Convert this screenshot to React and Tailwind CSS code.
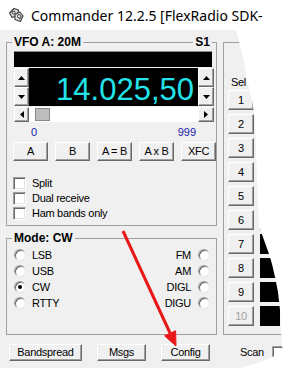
import React from "react";

const btn =
  "flex items-center justify-center bg-[#f0f0f0] border border-t-white border-l-white border-r-[#696969] border-b-[#696969] shadow-[inset_-1px_-1px_0_#a0a0a0]";

function Tri({ dir }) {
  const vert = dir === "up" || dir === "down";
  const w = vert ? 7 : 4;
  const h = vert ? 4 : 7;
  const pts = {
    up: "0,4 3.5,0 7,4",
    down: "0,0 7,0 3.5,4",
    left: "4,0 4,7 0,3.5",
    right: "0,0 0,7 4,3.5",
  }[dir];
  return (
    <svg width={w} height={h} viewBox={`0 0 ${w} ${h}`}>
      <polygon points={pts} fill="black" />
    </svg>
  );
}

function Check() {
  return (
    <span className="block h-[13px] w-[13px] border border-t-[#a0a0a0] border-l-[#a0a0a0] border-r-white border-b-white bg-white shadow-[inset_1px_1px_0_#696969,inset_-1px_-1px_0_#e3e3e3]" />
  );
}

function Radio({ checked }) {
  return (
    <span className="flex h-[12px] w-[12px] items-center justify-center rounded-full border border-t-[#a0a0a0] border-l-[#a0a0a0] border-r-[#e3e3e3] border-b-[#e3e3e3] bg-white shadow-[inset_1px_1px_0_#696969]">
      {checked && <span className="h-[4px] w-[4px] rounded-full bg-black" />}
    </span>
  );
}

function GroupTop({ label, right, open }) {
  return (
    <div className="flex h-[14px] items-center">
      <div className="h-[7px] w-[6px] self-end border-l border-t border-[#a0a0a0]" />
      {label && <span className="px-[2px] text-[12px] font-bold leading-none tracking-normal">{label}</span>}
      <div className="h-[7px] flex-1 self-end border-t border-[#a0a0a0]" />
      {right && <span className="px-[2px] text-[12px] font-bold leading-none tracking-normal">{right}</span>}
      {!open && <div className="h-[7px] w-[5px] self-end border-r border-t border-[#a0a0a0]" />}
    </div>
  );
}

function AppIcon() {
  return (
    <svg className="shrink-0" width="16" height="16" viewBox="0 0 16 16">
      <path d="M1.5 6 L6 1.5 L10.5 3 L9.5 8.5 L4 10.5 Z" fill="#dcdcdc" stroke="#3a3a3a" strokeWidth="1.1" strokeLinejoin="round" />
      <path d="M7 7.5 L12 5 L15 9 L12.5 14.5 L7 12.5 Z" fill="#ececec" stroke="#3a3a3a" strokeWidth="1.1" strokeLinejoin="round" />
      <circle cx="11.2" cy="9.3" r="1.8" fill="none" stroke="#3a3a3a" strokeWidth="1" />
      <path d="M12.8 9.5 L11.5 12.5" stroke="#3a3a3a" strokeWidth="1" />
      <circle cx="5.6" cy="5.6" r="1.5" fill="none" stroke="#3a3a3a" strokeWidth="1" />
    </svg>
  );
}

export default function App() {
  const sel = ["1", "2", "3", "4", "5", "6", "7", "8", "9", "10"];
  const modes = [
    ["LSB", "FM", false],
    ["USB", "AM", false],
    ["CW", "DIGL", true],
    ["RTTY", "DIGU", false],
  ];
  return (
    <div className="relative h-[368px] w-[288px] overflow-hidden bg-[#f0f0f0] font-['Liberation_Sans',Arial,sans-serif] text-[11px] tracking-[-0.3px] text-black">
      {/* title bar */}
      <div className="flex h-[30px] items-center bg-white pl-[8px]">
        <AppIcon />
        <span className="ml-[7px] whitespace-nowrap font-['Noto_Sans',sans-serif] text-[14px] tracking-normal text-black">
          Commander 12.2.5 [FlexRadio SDK-
        </span>
      </div>

      <div className="flex gap-[6px] pl-[6px] pt-[5px]">
        {/* left column */}
        <div className="flex w-[213px] flex-col">
          {/* VFO group */}
          <div className="flex flex-col">
            <GroupTop label="VFO A: 20M" right="S1" />
            <div className="flex h-[177px] flex-col border-x border-b border-[#a0a0a0] pl-[7px] pt-[2px]">
              <div className="h-[16px] w-[198px] border-t border-[#8a8a8a] bg-black" />
              <div className="mt-[1px] flex h-[38px]">
                <div className="flex w-[15px] flex-col">
                  <div className={`${btn} h-[19px]`}><Tri dir="up" /></div>
                  <div className={`${btn} h-[19px]`}><Tri dir="down" /></div>
                </div>
                <div className="flex w-[169px] items-start justify-end bg-black pr-[4px] pt-[6px]">
                  <span className="text-[31px] leading-none tracking-normal text-[#22e4ea]">14.025,50</span>
                </div>
                <div className="flex w-[16px] flex-col">
                  <div className={`${btn} h-[19px]`}><Tri dir="up" /></div>
                  <div className={`${btn} h-[19px]`}><Tri dir="down" /></div>
                </div>
              </div>
              <div className="mt-[1px] flex h-[15px] w-[200px]">
                <div className={`${btn} w-[15px]`}><Tri dir="left" /></div>
                <div className="flex flex-1 items-center bg-white pl-[6px]">
                  <div className="h-[13px] w-[15px] border border-[#8a8a8a] bg-[#bdbdbd]" />
                </div>
                <div className={`${btn} w-[16px]`}><Tri dir="right" /></div>
              </div>
              <div className="mt-[4px] flex h-[12px] w-[200px] items-center justify-between pl-[17px] pr-[18px] leading-none tracking-normal text-[#1a1aa6]">
                <span>0</span>
                <span>999</span>
              </div>
              <div className="mt-[4px] flex h-[19px] gap-[7px] -ml-px">
                {["A", "B", "A = B", "A x B", "XFC"].map((t) => (
                  <div key={t} className={`${btn} w-[35px]`}>{t}</div>
                ))}
              </div>
              <div className="mt-[15px] flex flex-col -ml-px">
                {["Split", "Dual receive", "Ham bands only"].map((t) => (
                  <div key={t} className="flex h-[15px] items-center gap-[6px]">
                    <Check />
                    <span>{t}</span>
                  </div>
                ))}
              </div>
            </div>
          </div>

          {/* Mode group */}
          <div className="mt-[5px] flex flex-col">
            <GroupTop label="Mode: CW" />
            <div className="flex h-[90px] flex-col border-x border-b border-[#a0a0a0] pl-[7px] pr-[6px] pt-[2px]">
              {modes.map(([l, r, c]) => (
                <div key={l} className="flex h-[16px] items-center justify-between">
                  <div className="flex items-center gap-[6px]">
                    <Radio checked={c} />
                    <span>{l}</span>
                  </div>
                  <div className="flex items-center gap-[7px]">
                    <span>{r}</span>
                    <Radio />
                  </div>
                </div>
              ))}
            </div>
          </div>
        </div>

        {/* right column */}
        <div className="flex w-[70px] shrink-0 flex-col">
          <GroupTop open />
          <div className="flex h-[286px] flex-col border-l border-b border-[#a0a0a0] pl-[4px] pt-[26px]">
            <div className="flex h-[15px] items-center pl-[3px]">Sel</div>
            <div className="flex flex-col gap-[4px]">
              {sel.map((n) => (
                <div key={n} className="flex items-center">
                  <div className={`${btn} h-[20px] w-[26px] ${n === "10" ? "text-[#a0a0a0]" : ""}`}>{n}</div>
                  <div className="ml-[6px] h-[20px] w-[20px] bg-black" />
                </div>
              ))}
            </div>
          </div>
        </div>
      </div>

      {/* bottom row */}
      <div className="mt-[9px] flex h-[17px] items-center pl-[9px]">
        <div className={`${btn} h-[17px] w-[73px]`}>Bandspread</div>
        <div className={`${btn} ml-[15px] h-[17px] w-[49px]`}>Msgs</div>
        <div className={`${btn} ml-[15px] h-[17px] w-[49px]`}>Config</div>
        <span className="ml-[30px]">Scan</span>
        <span className="ml-[8px]"><Check /></span>
      </div>

      {/* torn edge + annotation arrow */}
      <svg className="pointer-events-none absolute inset-0" width="288" height="368" viewBox="0 0 288 368">
        <polygon
          points="268,0 268,22 250,27 236,30 240,45 244,62 247,80 252,100 255,120 256,150 257,180 258,205 259,226 264,240 269,254 272,264 275,277 278,292 280,310 281,330 282,345 283,352 270,358 255,364 240,368 288,368 288,0"
          fill="white"
        />
        <line x1="123" y1="231" x2="170" y2="333" stroke="#e81818" strokeWidth="3" />
        <polygon points="176,346 175.6,330.8 164.6,335.8" fill="#e81818" stroke="#e81818" strokeWidth="1" strokeLinejoin="round" />
      </svg>
    </div>
  );
}
